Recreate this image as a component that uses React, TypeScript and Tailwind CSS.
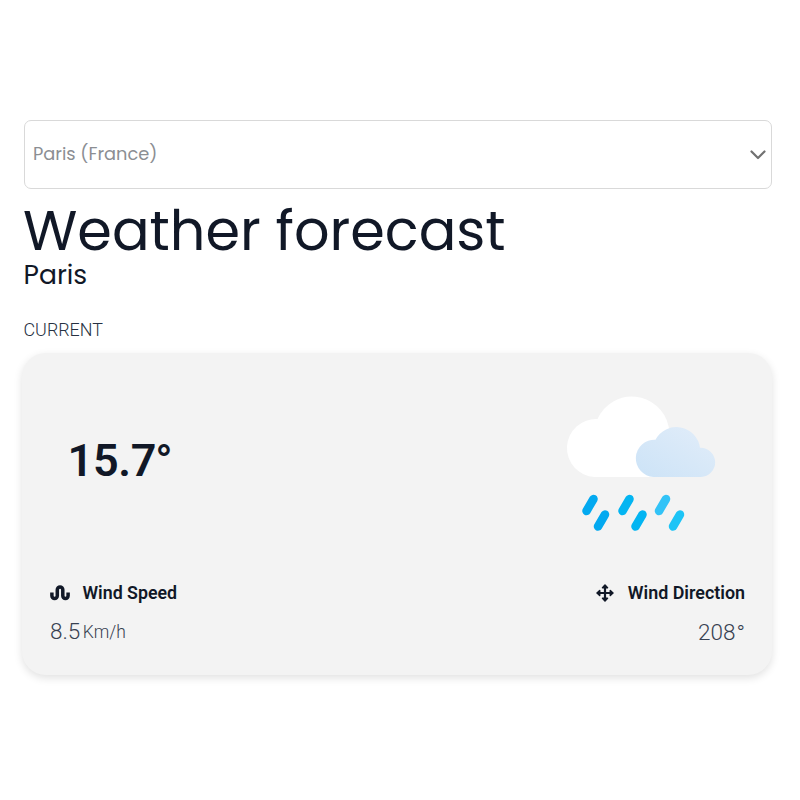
import React from 'react';

const poppins = "font-['Poppins',sans-serif]";

function WaveIcon() {
  return (
    <svg viewBox="0 0 20 16" className="h-4 w-5" fill="none" stroke="#111827" strokeWidth="3.500">
      <path d="M1.900 7.500V10.800a2.700 2.700 0 0 0 5.400 0V4.700a2.750 2.750 0 0 1 5.500 0V10.800a2.650 2.650 0 0 0 5.300 0V7.500" />
    </svg>
  );
}

function MoveIcon() {
  return (
    <svg viewBox="0 0 18 18" className="size-[18px]" fill="none" stroke="#111827" strokeWidth="2.200" strokeLinecap="round" strokeLinejoin="round">
      <path d="M9 2v14M2 9h14" />
      <path d="M6.500 3.700 9 1l2.500 2.700zM6.500 14.300 9 17l2.500-2.700zM3.700 6.500 1 9l2.700 2.500zM14.300 6.500 17 9l-2.700 2.500z" fill="#111827" strokeWidth="1.500" />
    </svg>
  );
}

function RainIcon() {
  return (
    <svg viewBox="0 0 190 165" className="mr-[6px] h-[165px] w-[190px]">
      <defs>
        <linearGradient id="cloud" x1="0" y1="1" x2="1" y2="0">
          <stop offset="0" stopColor="#cce3f7" />
          <stop offset="1" stopColor="#e2edf9" />
        </linearGradient>
      </defs>
      <path d="M45.500 97a29 29 0 1 1 3-58a37.500 37.500 0 0 1 71 7l10 51z" fill="#fff" />
      <path d="M104.500 97a18.300 18.300 0 0 1 2-37.300a23.700 23.700 0 0 1 44.500 8a14.500 14.500 0 1 1 1 29.300z" fill="url(#cloud)" />
      <g strokeWidth="8.500" strokeLinecap="round">
        <path d="M44.500 119l-7 12M56 134.500l-7 12" stroke="#03a9f0" />
        <path d="M80.500 119l-7 12M93.500 134.500l-7 12" stroke="#03b5f2" />
        <path d="M117 119l-7 12" stroke="#32c3f7" />
        <path d="M131 134.500l-7 12" stroke="#1dc4f6" />
      </g>
    </svg>
  );
}

export default function App() {
  return (
    <main className="h-[800px] w-[800px] overflow-hidden bg-white pt-[120px] pr-7 pl-6 font-['Roboto',sans-serif] text-[#111827]">
      <div className="flex h-[69px] w-[748px] items-center justify-between rounded-[7px] border border-[#d9d9d9] pr-[5px] pl-[8px]">
        <span className={`${poppins} text-[17.800px] text-[#8b8e93]`}>Paris (France)</span>
        <svg viewBox="0 0 16 10" className="h-[10px] w-4" fill="none" stroke="#717171" strokeWidth="2.200" strokeLinecap="round" strokeLinejoin="round">
          <path d="M1.500 1.500 8 8l6.500-6.500" />
        </svg>
      </div>
      <h1 className={`${poppins} -ml-px mt-[12px] h-[59px] text-[55.700px] leading-[60px] font-normal whitespace-nowrap`}>Weather forecast</h1>
      <h2 className={`${poppins} -ml-[0.500px] h-[30px] text-[26.600px] leading-[29px] font-normal`}>Paris</h2>
      <p className="-ml-[0.500px] mt-[30px] h-5 text-[17.900px] leading-5 font-light text-[#273142]">CURRENT</p>
      <section className="-ml-[2px] mt-[13px] flex h-[322px] w-[750px] flex-col rounded-[24px] bg-[#f3f3f3] pt-[27px] pr-[27px] pl-7 shadow-[0_3px_8px_rgba(0,0,0,0.12)]">
        <div className="flex h-[165px] justify-between">
          <p className="mt-[53px] ml-[17.500px] text-[45px] leading-[56px] font-semibold tracking-[-0.3px]">15.7<span className="-ml-px">°</span></p>
          <RainIcon />
        </div>
        <div className="mt-[36px] flex justify-between">
          <div>
            <div className="flex h-6 items-center text-[17.800px] font-semibold"><WaveIcon /><span className="ml-[12.500px]">Wind Speed</span></div>
            <p className="mt-[12px] flex h-[30px] items-center font-light text-[#374151]"><span className="text-[22.500px]">8.5</span><span className="ml-[2.500px] text-[17.500px]">Km/h</span></p>
          </div>
          <div>
            <div className="flex h-6 items-center text-[17.900px] font-semibold"><MoveIcon /><span className="ml-[13.500px]">Wind Direction</span></div>
            <p className="mt-[12px] flex h-[30px] justify-end text-[22.500px] leading-[30px] font-light text-[#374151]"><span>208</span><span className="ml-px pt-px">°</span></p>
          </div>
        </div>
      </section>
    </main>
  );
}
